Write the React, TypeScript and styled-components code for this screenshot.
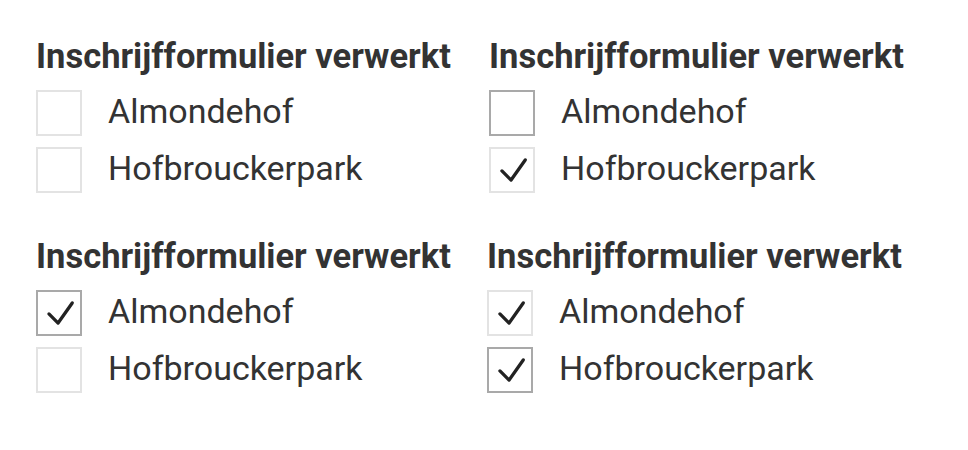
import React from 'react';
import styled, { createGlobalStyle } from 'styled-components';

const GlobalStyle = createGlobalStyle`
  body {
    margin: 0;
    background: #ffffff;
    font-family: Roboto, 'Liberation Sans', Arial, sans-serif;
    color: #333333;
  }
`;

const Page = styled.div`
  display: grid;
  grid-template-columns: 453px 453px;
  row-gap: 43px;
  padding: 36px 0 0 36px;
`;

const Group = styled.div<{ $shift?: number }>`
  display: flex;
  flex-direction: column;
  margin-left: ${(p) => p.$shift ?? 0}px;
`;

const Heading = styled.div`
  font-size: 34.5px;
  font-weight: 700;
  line-height: 40px;
  color: #333333;
  margin-bottom: 14px;
  white-space: nowrap;
`;

const Options = styled.div`
  display: flex;
  flex-direction: column;
  gap: 11px;
`;

const Row = styled.label`
  display: flex;
  align-items: center;
  gap: 26px;
`;

const Box = styled.span<{ $focused?: boolean }>`
  width: 46px;
  height: 46px;
  box-sizing: border-box;
  border: 2px solid ${(p) => (p.$focused ? '#a9a9a9' : '#e3e3e3')};
  display: flex;
  align-items: center;
  justify-content: center;
  background: #fff;
`;

const Label = styled.span`
  font-size: 34px;
  line-height: 40px;
  color: #333333;
  margin-bottom: 4px;
`;

function Check() {
  return (
    <svg width="46" height="46" viewBox="0 0 46 46">
      <path
        d="M12 24 L22 34 L37.5 12"
        fill="none"
        stroke="#222222"
        strokeWidth="3.6"
        strokeLinecap="round"
        strokeLinejoin="round"
      />
    </svg>
  );
}

type Option = { name: string; checked: boolean; focused: boolean };

const groups: { shift: number; opts: Option[] }[] = [
  {
    shift: 0,
    opts: [
      { name: 'Almondehof', checked: false, focused: false },
      { name: 'Hofbrouckerpark', checked: false, focused: false },
    ],
  },
  {
    shift: 0,
    opts: [
      { name: 'Almondehof', checked: false, focused: true },
      { name: 'Hofbrouckerpark', checked: true, focused: false },
    ],
  },
  {
    shift: 0,
    opts: [
      { name: 'Almondehof', checked: true, focused: true },
      { name: 'Hofbrouckerpark', checked: false, focused: false },
    ],
  },
  {
    shift: -2,
    opts: [
      { name: 'Almondehof', checked: true, focused: false },
      { name: 'Hofbrouckerpark', checked: true, focused: true },
    ],
  },
];

export default function App() {
  return (
    <>
      <GlobalStyle />
      <Page>
        {groups.map((g, i) => (
          <Group key={i} $shift={g.shift}>
            <Heading>Inschrijfformulier verwerkt</Heading>
            <Options>
              {g.opts.map((o) => (
                <Row key={o.name}>
                  <Box $focused={o.focused}>{o.checked && <Check />}</Box>
                  <Label>{o.name}</Label>
                </Row>
              ))}
            </Options>
          </Group>
        ))}
      </Page>
    </>
  );
}
